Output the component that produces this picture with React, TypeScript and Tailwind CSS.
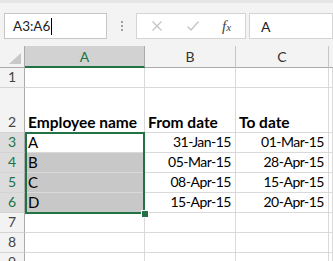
import React from "react";

const font = { fontFamily: "Lato, 'Liberation Sans', sans-serif" };

function RowHead({ n, sel }: { n: string; sel?: boolean }) {
  return (
    <div
      className={
        "flex items-end justify-center pb-[1px] border-r border-b border-r-[#ababab] border-b-[#d4d4d4] text-[14px] leading-[18px] " +
        (sel ? "bg-[#dcdcdc] text-[#217346]" : "bg-[#f3f3f3] text-[#444]")
      }
    >
      <span>{n}</span>
    </div>
  );
}

function Cell({
  children,
  right,
  bold,
  fill,
  color,
}: {
  children?: React.ReactNode;
  right?: boolean;
  bold?: boolean;
  fill?: boolean;
  color?: string;
}) {
  return (
    <div
      className={
        "flex items-end overflow-hidden whitespace-nowrap border-r border-b leading-[18px] pb-[1px] " +
        (right
          ? "justify-end pr-[4px] text-[14px] tracking-[-0.5px] "
          : bold
          ? "justify-start pl-[3px] text-[15.5px] font-bold "
          : "justify-start pl-[3px] text-[15px] ") +
        (fill ? "bg-[#c8c8c8] border-[#dadada] " : "bg-white border-[#d9d9d9] ") +
        (color ?? "text-black")
      }
    >
      {children}
    </div>
  );
}

export default function App() {
  return (
    <div className="w-[333px] h-[261px] overflow-hidden bg-white" style={font}>
      {/* formula bar */}
      <div className="h-[46px] bg-[#f3f3f3] border-t-[3px] border-t-[#e6e6e6] flex items-start pt-[10px] pl-[4px]">
        <div className="w-[103px] h-[26px] bg-white border border-[#c6c6c6] flex items-center pl-[8px] text-[13.5px] text-[#222]">
          <span>A3:A6</span>
          <span className="w-[1px] h-[17px] bg-black ml-[1px]" />
        </div>
        <div className="ml-[14px] h-[26px] flex flex-col justify-center gap-[2px]">
          <span className="w-[2px] h-[2px] bg-[#a0a0a0]" />
          <span className="w-[2px] h-[2px] bg-[#a0a0a0]" />
          <span className="w-[2px] h-[2px] bg-[#a0a0a0]" />
        </div>
        <div className="ml-[13px] w-[110px] h-[26px] bg-white border border-[#d4d4d4] flex items-center">
          <svg width="12" height="12" viewBox="0 0 12 12" className="ml-[14px]">
            <path d="M1.5 1.5 L10.5 10.5 M10.5 1.5 L1.5 10.5" stroke="#c4c4c4" strokeWidth="1.3" fill="none" />
          </svg>
          <svg width="14" height="12" viewBox="0 0 14 12" className="ml-[23px]">
            <path d="M1.5 6.5 L5 10 L12.5 1.5" stroke="#c4c4c4" strokeWidth="1.3" fill="none" />
          </svg>
          <span
            className="ml-[22px] italic text-[15px] text-[#444] leading-none"
            style={{ fontFamily: "'Liberation Serif', serif" }}
          >
            f<span className="text-[11px]">x</span>
          </span>
        </div>
        <div className="ml-[3px] flex-1 h-[26px] bg-white border border-[#d4d4d4] flex items-center pl-[11px] text-[14px] text-[#222]">
          A
        </div>
      </div>

      {/* grid */}
      <div className="relative grid grid-cols-[25px_120px_91px_93px_1fr] grid-rows-[22px_20px_45px_20px_20px_20px_20px_20px_20px_20px]">
        {/* header row */}
        <div className="relative bg-[#f3f3f3] border-r border-b border-r-[#ababab] border-b-[#ababab]">
          <svg width="12" height="11" viewBox="0 0 12 11" className="absolute right-[3px] bottom-[3px]">
            <path d="M12 0 L12 11 L0 11 Z" fill="#c8c8c8" />
          </svg>
        </div>
        <div className="bg-[#d2d2d2] border-r border-r-[#ababab] border-b-2 border-b-[#217346] flex items-end justify-center text-[14px] leading-[18px] text-[#217346] pb-[0px]">
          A
        </div>
        <div className="bg-[#f3f3f3] border-r border-b border-r-[#c6c6c6] border-b-[#ababab] flex items-end justify-center text-[14px] leading-[18px] text-[#333] pb-[1px]">
          B
        </div>
        <div className="bg-[#f3f3f3] border-r border-b border-r-[#c6c6c6] border-b-[#ababab] flex items-end justify-center text-[14px] leading-[18px] text-[#333] pb-[1px]">
          C
        </div>
        <div className="bg-[#f3f3f3] border-b border-b-[#ababab]" />

        {/* row 1 */}
        <RowHead n="1" />
        <Cell />
        <Cell />
        <Cell />
        <Cell />

        {/* row 2 */}
        <RowHead n="2" />
        <Cell bold>Employee name</Cell>
        <Cell bold>From date</Cell>
        <Cell bold>To date</Cell>
        <Cell bold color="text-[#c65911]">Days</Cell>

        {/* row 3 */}
        <RowHead n="3" sel />
        <Cell>A</Cell>
        <Cell right>31-Jan-15</Cell>
        <Cell right>01-Mar-15</Cell>
        <Cell />

        {/* row 4 */}
        <RowHead n="4" sel />
        <Cell fill>B</Cell>
        <Cell right>05-Mar-15</Cell>
        <Cell right>28-Apr-15</Cell>
        <Cell />

        {/* row 5 */}
        <RowHead n="5" sel />
        <Cell fill>C</Cell>
        <Cell right>08-Apr-15</Cell>
        <Cell right>15-Apr-15</Cell>
        <Cell />

        {/* row 6 */}
        <RowHead n="6" sel />
        <Cell fill>D</Cell>
        <Cell right>15-Apr-15</Cell>
        <Cell right>20-Apr-15</Cell>
        <Cell />

        {/* rows 7-9 */}
        <RowHead n="7" />
        <Cell />
        <Cell />
        <Cell />
        <Cell />
        <RowHead n="8" />
        <Cell />
        <Cell />
        <Cell />
        <Cell />
        <RowHead n="9" />
        <Cell />
        <Cell />
        <Cell />
        <Cell />

        {/* selection overlay */}
        <div className="absolute left-[25px] top-[86px] w-[120px] h-[82px] border-2 border-[#217346] pointer-events-none" />
        <div className="absolute left-[141px] top-[164px] w-[6px] h-[6px] bg-[#217346] border border-white box-content" />
      </div>
    </div>
  );
}
